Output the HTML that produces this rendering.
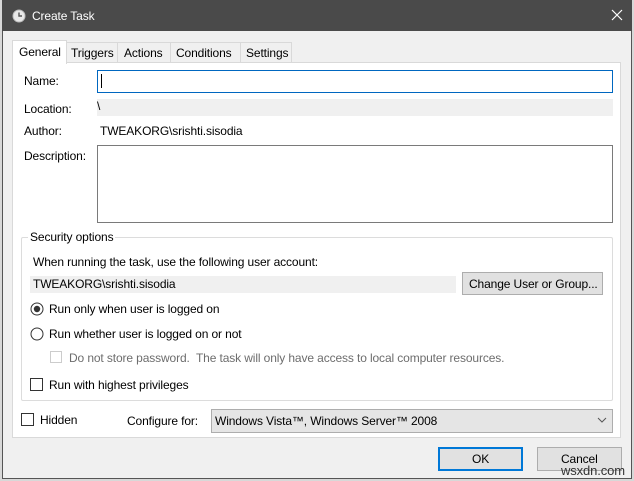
<!DOCTYPE html>
<html><head><style>
*{margin:0;padding:0;box-sizing:border-box}
body{width:634px;height:481px;background:#fff;font-family:"Liberation Sans",sans-serif;font-size:12px;color:#000;position:relative;overflow:hidden;letter-spacing:-0.12px}
.a{position:absolute}
.t{position:absolute;white-space:nowrap;line-height:14px}
</style></head><body>
<div class="a" style="left:0;top:0;width:634px;height:481px;background:#d8d8d8"></div>
<div class="a" style="left:2px;top:0;width:630px;height:479px;background:#f0f0f0;border:1px solid #555"></div>
<div class="a" style="left:2px;top:0;width:630px;height:31px;background:#4a4a4a"></div>
<svg class="a" style="left:12px;top:9px" width="14" height="14"><circle cx="7" cy="7" r="6" fill="#e8e8e8" stroke="#bbb"/><path d="M7 3.5V7H10" stroke="#555" stroke-width="1.4" fill="none"/></svg>
<div class="t" style="left:32px;top:9px;color:#fff;font-size:12px">Create Task</div>
<svg class="a" style="left:611px;top:9px" width="12" height="12"><path d="M1 1L11 11M11 1L1 11" stroke="#fff" stroke-width="1.2"/></svg>
<div class="a" style="left:12px;top:62px;width:609px;height:376px;background:#fff;border:1px solid #d9d9d9"></div>
<div class="a" style="left:66px;top:42px;width:52px;height:21px;background:#f0f0f0;border:1px solid #d9d9d9"></div>
<div class="a" style="left:117px;top:42px;width:54px;height:21px;background:#f0f0f0;border:1px solid #d9d9d9"></div>
<div class="a" style="left:170px;top:42px;width:71px;height:21px;background:#f0f0f0;border:1px solid #d9d9d9"></div>
<div class="a" style="left:240px;top:42px;width:52px;height:21px;background:#f0f0f0;border:1px solid #d9d9d9"></div>
<div class="a" style="left:12px;top:40px;width:55px;height:24px;background:#fff;border:1px solid #d9d9d9;border-bottom:none"></div>
<div class="t" style="left:19px;top:45px">General</div>
<div class="t" style="left:71px;top:46px">Triggers</div>
<div class="t" style="left:124px;top:46px">Actions</div>
<div class="t" style="left:176px;top:46px">Conditions</div>
<div class="t" style="left:246px;top:46px">Settings</div>
<div class="t" style="left:24px;top:74px">Name:</div>
<div class="a" style="left:97px;top:70px;width:516px;height:23px;border:1px solid #0067c0"></div>
<div class="a" style="left:101px;top:74px;width:1px;height:14px;background:#000"></div>
<div class="t" style="left:24px;top:102px">Location:</div>
<div class="a" style="left:97px;top:99px;width:516px;height:17px;background:#f0f0f0"></div>
<div class="t" style="left:97px;top:99px">\</div>
<div class="t" style="left:24px;top:124px">Author:</div>
<div class="t" style="left:100px;top:124px">TWEAKORG\srishti.sisodia</div>
<div class="t" style="left:24px;top:149px">Description:</div>
<div class="a" style="left:97px;top:145px;width:516px;height:78px;border:1px solid #7a7a7a"></div>
<div class="a" style="left:21px;top:237px;width:592px;height:164px;border:1px solid #dcdcdc;border-radius:2px"></div>
<div class="t" style="left:28px;top:230px;background:#fff;padding:0 2px">Security options</div>
<div class="t" style="left:33px;top:255px">When running the task, use the following user account:</div>
<div class="a" style="left:30px;top:276px;width:426px;height:17px;background:#f0f0f0"></div>
<div class="t" style="left:33px;top:277px">TWEAKORG\srishti.sisodia</div>
<div class="a" style="left:462px;top:272px;width:141px;height:23px;background:#e1e1e1;border:1px solid #adadad"></div>
<div class="t" style="left:469px;top:277px">Change User or Group...</div>
<svg class="a" style="left:30px;top:302px" width="14" height="14"><circle cx="7" cy="7" r="6" fill="#fff" stroke="#333"/><circle cx="7" cy="7" r="3.2" fill="#333"/></svg>
<div class="t" style="left:49px;top:302px">Run only when user is logged on</div>
<svg class="a" style="left:30px;top:327px" width="14" height="14"><circle cx="7" cy="7" r="6" fill="#fff" stroke="#333"/></svg>
<div class="t" style="left:49px;top:327px">Run whether user is logged on or not</div>
<div class="a" style="left:50px;top:351px;width:12px;height:12px;border:1px solid #ccc"></div>
<div class="t" style="left:69px;top:351px;color:#6d6d6d">Do not store password.&nbsp; The task will only have access to local computer resources.</div>
<div class="a" style="left:30px;top:378px;width:13px;height:13px;border:1px solid #333"></div>
<div class="t" style="left:49px;top:378px">Run with highest privileges</div>
<div class="a" style="left:21px;top:413px;width:13px;height:13px;border:1px solid #333"></div>
<div class="t" style="left:40px;top:413px">Hidden</div>
<div class="t" style="left:127px;top:414px">Configure for:</div>
<div class="a" style="left:211px;top:409px;width:402px;height:24px;background:#e5e5e5;border:1px solid #adadad"></div>
<div class="t" style="left:215px;top:414px">Windows Vista™, Windows Server™ 2008</div>
<svg class="a" style="left:597px;top:417px" width="10" height="7"><path d="M1 1L5 5L9 1" stroke="#555" fill="none"/></svg>
<div class="a" style="left:438px;top:447px;width:85px;height:24px;background:#e1e1e1;border:2px solid #0078d7"></div>
<div class="t" style="left:472px;top:452px">OK</div>
<div class="a" style="left:537px;top:447px;width:85px;height:24px;background:#e1e1e1;border:1px solid #adadad"></div>
<div class="t" style="left:561px;top:452px">Cancel</div>
<div class="t" style="left:561px;top:464px;font-size:13px;color:#333">wsxdn.com</div>
</body></html>
